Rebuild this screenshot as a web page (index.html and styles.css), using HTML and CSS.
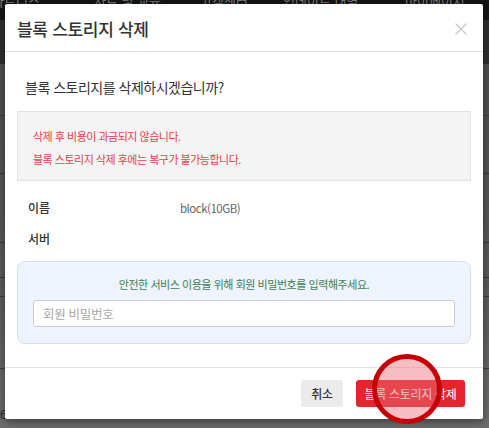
FILE: index.html
```html
<!DOCTYPE html>
<html lang="ko">
<head>
<meta charset="utf-8">
<title>블록 스토리지 삭제</title>
<link rel="stylesheet" href="styles.css">
</head>
<body>
<div class="page">
  <div class="nav">
    <span class="nav-item n1">파트너스</span>
    <span class="nav-item n2">자료 및 교육</span>
    <span class="nav-item n3">고객센터</span>
    <span class="nav-item n4">업데이트 내역</span>
    <span class="nav-item n5">마이페이지</span>
  </div>
  <div class="subbar"></div>
  <div class="rows">
    <div class="row r1"></div>
    <div class="row r2"></div>
    <div class="row r3"></div>
    <div class="row r4"><span class="edge-text">(</span></div>
    <div class="row r5"></div>
    <div class="row r6"></div>
    <div class="row r7"><span class="edge-left">6</span></div>
  </div>
</div>

<div class="modal">
  <div class="modal-header">
    <h1 class="modal-title">블록 스토리지 삭제</h1>
    <span class="modal-close" aria-label="닫기">
      <svg width="12" height="12" viewBox="0 0 12 12"><path d="M0.5 0.5 L11.5 11.5 M11.5 0.5 L0.5 11.5" stroke="#c8c8c8" stroke-width="1.3" fill="none"/></svg>
    </span>
  </div>
  <div class="modal-body">
    <p class="question">블록 스토리지를 삭제하시겠습니까?</p>
    <div class="warning">
      <p>삭제 후 비용이 과금되지 않습니다.</p>
      <p>블록 스토리지 삭제 후에는 복구가 불가능합니다.</p>
    </div>
    <dl class="info">
      <div class="info-row"><dt>이름</dt><dd>block(10GB)</dd></div>
      <div class="info-row"><dt>서버</dt><dd></dd></div>
    </dl>
    <div class="confirm">
      <p class="confirm-text">안전한 서비스 이용을 위해 회원 비밀번호를 입력해주세요.</p>
      <input class="confirm-input" type="password" placeholder="회원 비밀번호">
    </div>
  </div>
  <div class="modal-footer">
    <button class="btn btn-cancel">취소</button>
    <button class="btn btn-delete">블록 스토리지 삭제</button>
  </div>
</div>

<div class="click-marker"></div>
</body>
</html>
```
FILE: styles.css
```css
* { box-sizing: border-box; }
html, body { margin: 0; padding: 0; }
body {
  width: 489px;
  height: 428px;
  overflow: hidden;
  position: relative;
  font-family: "Noto Sans CJK KR", "Noto Sans", sans-serif;
  background: #5c5c5c;
}

/* dimmed background page */
.page { width: 489px; height: 428px; display: flex; flex-direction: column; }
.nav {
  height: 20px;
  background: #141414;
  position: relative;
  overflow: hidden;
  display: flex;
}
.nav-item {
  position: absolute;
  top: -6px;
  font-size: 13px;
  line-height: 13px;
  color: #7d7d7d;
  white-space: nowrap;
}
.n1 { left: -8px; }
.n2 { left: 94px; }
.n3 { left: 200px; }
.n4 { left: 283px; }
.n5 { left: 405px; }
.subbar { height: 44px; background: #2f2f2f; }
.rows { flex: 1; display: flex; flex-direction: column; background: linear-gradient(#4e4e4e, #5a5a5a 60%, #6e6e6e); }
.row { border-bottom: 1px solid #3a3a3a; position: relative; }
.r1 { height: 52px; }
.r2 { height: 58px; }
.r3 { height: 69px; }
.r4 { height: 35px; }
.r5 { height: 19px; }
.r6 { height: 72px; }
.r7 { flex: 1; border-bottom: 0; }
.edge-text { position: absolute; right: -4px; top: 4px; color: #2a2a2a; font-size: 14px; }
.edge-left { position: absolute; left: 0; top: 36px; color: #2a2a2a; font-size: 12px; }

/* modal */
.modal {
  position: absolute;
  left: 5px;
  top: 4px;
  width: 478px;
  height: 415px;
  background: #fff;
  border-radius: 2px;
  box-shadow: 0 3px 8px rgba(0,0,0,0.45);
  display: flex;
  flex-direction: column;
}
.modal-header {
  height: 48px;
  border-bottom: 1px solid #e2e2e2;
  display: flex;
  align-items: center;
  justify-content: space-between;
  padding: 0 16px 0 12px;
}
.modal-title {
  margin: 0;
  font-size: 17px;
  font-weight: 500;
  color: #333;
  letter-spacing: -0.3px;
  line-height: 1;
  padding-top: 2px;
}
.modal-close { display: flex; width: 12px; height: 12px; margin-top: 2px; }

.modal-body {
  flex: 1;
  padding: 0 12px;
  border-bottom: 1px solid #e2e2e2;
}
.question {
  margin: 0;
  padding: 25px 0 0 8px;
  height: 59px;
  font-size: 14px;
  line-height: 20px;
  color: #333;
  letter-spacing: -0.5px;
}
.warning {
  background: #f4f4f4;
  border: 1px solid #e2e2e2;
  height: 70px;
  padding: 13px 15px 0;
}
.warning p {
  margin: 0;
  font-size: 11px;
  line-height: 23px;
  color: #e8414a;
  letter-spacing: -0.5px;
}
.info { margin: 0; padding: 17px 0 0 11px; }
.info-row { display: flex; height: 31px; align-items: flex-start; }
.info dt {
  width: 152px;
  font-size: 12px;
  font-weight: 500;
  color: #333;
  line-height: 20px;
}
.info dd {
  margin: 0;
  font-size: 11.5px;
  color: #666;
  line-height: 20px;
  letter-spacing: -0.5px;
}
.confirm {
  margin-top: 1px;
  height: 83px;
  background: #eef3fd;
  border: 1px solid #d6dff2;
  border-radius: 8px;
  padding: 13px 15px 0;
  display: flex;
  flex-direction: column;
  align-items: center;
}
.confirm-text {
  margin: 0;
  font-size: 11px;
  line-height: 18px;
  color: #3d8150;
  letter-spacing: -0.45px;
}
.confirm-input {
  margin-top: 7px;
  width: 100%;
  height: 27px;
  border: 1px solid #ccc;
  border-radius: 3px;
  background: #fff;
  padding: 0 9px;
  font-family: inherit;
  font-size: 12.5px;
  outline: none;
}
.confirm-input::placeholder { color: #a6a6a6; letter-spacing: -0.3px; }

.modal-footer {
  height: 51px;
  display: flex;
  justify-content: flex-end;
  align-items: flex-start;
  gap: 13px;
  padding: 12px 18px 0 0;
}
.btn {
  height: 27px;
  border: 0;
  border-radius: 3px;
  font-family: inherit;
  font-size: 12px;
  letter-spacing: -0.3px;
  padding: 0;
  cursor: pointer;
}
.btn-cancel { width: 42px; background: #ebebeb; color: #333; font-weight: 500; }
.btn-delete { width: 109px; background: #e4252f; color: #fff; }

.click-marker {
  position: absolute;
  left: 372px;
  top: 354px;
  width: 70px;
  height: 70px;
  border-radius: 50%;
  border: 5px solid #c70008;
  background: rgba(235, 110, 120, 0.45);
}
```
